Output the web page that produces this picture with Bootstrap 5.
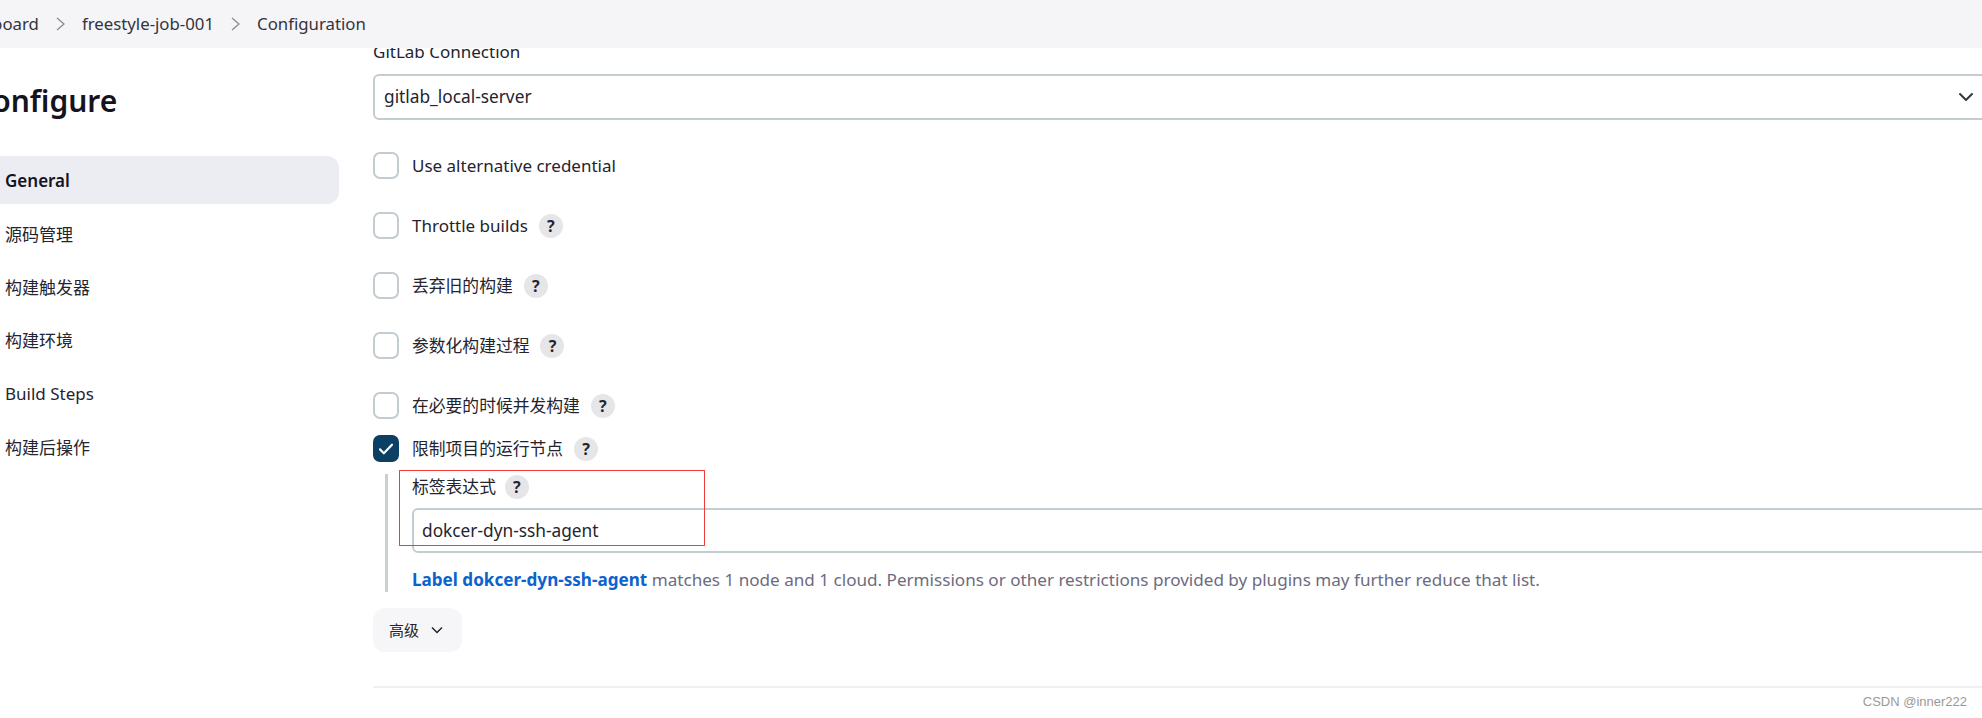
<!DOCTYPE html>
<html lang="zh">
<head>
    <meta charset="UTF-8">
    <title>freestyle-job-001 Config</title>
    <link href="https://cdn.jsdelivr.net/npm/bootstrap@5.3.0/dist/css/bootstrap.min.css" rel="stylesheet">
    <style>
        html, body { height: 718px; overflow: hidden; }
        body {
            font-family: "Noto Sans", "Noto Sans CJK SC", sans-serif;
            font-size: 17px;
            color: #24242f;
            background: #fff;
        }
        .top-crumbs {
            position: relative;
            z-index: 2;
            height: 48px;
            background: #f5f5f7;
        }
        .top-crumbs ol { margin-left: -48px; font-size: 16.8px; gap: 17px; color: #33333f; }
        .top-crumbs svg { display: block; }
        .page-body { margin-right: -20px; }
        .side-col { width: 359px; margin-left: -20px; flex: none; padding-top: 35px; }
        .side-title { font-size: 30px; line-height: 36px; font-weight: 600; margin: 0 0 37px -7px; color: #14141f; }
        .side-col .nav { gap: 5.3px; }
        .side-col .nav-link {
            height: 48px;
            padding: 2px 0 0 25px;
            display: flex;
            align-items: center;
            border-radius: 12px;
            color: #24242f;
        }
        .side-col .nav-link.active { background: #ecedf3; color: #14141f; font-weight: 600; }
        .main-col { flex: 1; min-width: 0; margin-left: 34px; margin-top: -8px; }
        .field-label { line-height: 24px; margin-bottom: 10px; }
        .job-select, .job-input {
            height: 46px;
            border: 2px solid #c3ccd1;
            border-radius: 6px;
            font-size: 17.3px;
            color: #24242f;
            box-shadow: none;
        }
        .job-select {
            padding: 0 40px 0 9px;
            background-position: right 24px center;
            background-size: 20px 16px;
            margin-bottom: 32px;
        }
        .job-input { padding: 0 8px; height: 45px; }
        .check-row { height: 27px; margin-bottom: 33px; gap: 13px; }
        .check-row.tight { margin-bottom: 12px; }
        .check-row.before-tight { margin-bottom: 16px; }
        .cjk-label { font-size: 16.8px; }
        .check-row .form-check-input {
            width: 26px;
            height: 27px;
            margin: 0;
            flex: none;
            border: 2px solid #c3ccd1;
            border-radius: 7px;
        }
        .check-row .form-check-input:checked {
            background-color: #0b3f63;
            border-color: #0b3f63;
            background-size: 24px;
            background-image: url("data:image/svg+xml,%3csvg xmlns='http://www.w3.org/2000/svg' viewBox='0 0 20 20'%3e%3cpath fill='none' stroke='%23fff' stroke-width='1.8' stroke-linecap='round' stroke-linejoin='round' d='M5 10.5l3.2 3.2 6.8-7'/%3e%3c/svg%3e");
        }
        .help-dot {
            width: 24px;
            height: 24px;
            margin-left: -2px;
            border-radius: 50%;
            background: #e6e6e9;
            font-size: 16px;
            font-weight: 700;
            flex: none;
        }
        .nested-block {
            position: relative;
            margin-left: 12px;
            padding-left: 24px;
            border-left: 3px solid #c8d0d4;
            height: 118px;
            padding-top: 1px;
        }
        .nested-label { height: 24px; margin-bottom: 9px; gap: 9px; }
        .nested-label .help-dot { margin-left: 0; }
        .valid-msg { margin-top: 15px; line-height: 24px; color: #6d6b80; white-space: nowrap; font-size: 17.1px; }
        .valid-msg a { color: #0b63ce; font-weight: 700; text-decoration: none; }
        .red-box {
            position: absolute;
            left: 11px;
            top: -4px;
            width: 306px;
            height: 76px;
            border: 1px solid #f23c3c;
            pointer-events: none;
        }
        .more-btn {
            margin-top: 16px;
            width: 89px;
            height: 44px;
            padding: 0 0 0 16px;
            gap: 12px;
            border: 0;
            border-radius: 12px;
            background: #f6f6f8;
            font-size: 15px;
            color: #24242f;
        }
        .end-line { margin: 34px 0 0; height: 2px; background: #f0f0f4; border: 0; opacity: 1; }
        .csdn-mark {
            position: absolute;
            right: 15px;
            bottom: 7px;
            font-family: "Liberation Sans", sans-serif;
            font-size: 13px;
            color: #9a9a9a;
        }
    </style>
</head>
<body>
    <nav class="top-crumbs d-flex align-items-center">
        <ol class="list-unstyled d-flex align-items-center mb-0">
            <li>Dashboard</li>
            <li><svg width="9" height="14" viewBox="0 0 9 14" fill="none" stroke="#8a8a94" stroke-width="1.3"><path d="M1 1l7 6-7 6"/></svg></li>
            <li>freestyle-job-001</li>
            <li><svg width="9" height="14" viewBox="0 0 9 14" fill="none" stroke="#8a8a94" stroke-width="1.3"><path d="M1 1l7 6-7 6"/></svg></li>
            <li>Configuration</li>
        </ol>
    </nav>

    <div class="page-body d-flex">
        <aside class="side-col">
            <h1 class="side-title">Configure</h1>
            <div class="nav nav-pills flex-column">
                <a class="nav-link active" href="#">General</a>
                <a class="nav-link" href="#">源码管理</a>
                <a class="nav-link" href="#">构建触发器</a>
                <a class="nav-link" href="#">构建环境</a>
                <a class="nav-link" href="#">Build Steps</a>
                <a class="nav-link" href="#">构建后操作</a>
            </div>
        </aside>

        <main class="main-col">
            <div class="field-label">GitLab Connection</div>
            <select class="form-select job-select">
                <option>gitlab_local-server</option>
            </select>

            <div class="check-row d-flex align-items-center">
                <input class="form-check-input" type="checkbox">
                <span>Use alternative credential</span>
            </div>
            <div class="check-row d-flex align-items-center">
                <input class="form-check-input" type="checkbox">
                <span>Throttle builds</span>
                <span class="help-dot d-flex align-items-center justify-content-center">?</span>
            </div>
            <div class="check-row d-flex align-items-center">
                <input class="form-check-input" type="checkbox">
                <span class="cjk-label">丢弃旧的构建</span>
                <span class="help-dot d-flex align-items-center justify-content-center">?</span>
            </div>
            <div class="check-row d-flex align-items-center">
                <input class="form-check-input" type="checkbox">
                <span class="cjk-label">参数化构建过程</span>
                <span class="help-dot d-flex align-items-center justify-content-center">?</span>
            </div>
            <div class="check-row before-tight d-flex align-items-center">
                <input class="form-check-input" type="checkbox">
                <span class="cjk-label">在必要的时候并发构建</span>
                <span class="help-dot d-flex align-items-center justify-content-center">?</span>
            </div>
            <div class="check-row tight d-flex align-items-center">
                <input class="form-check-input" type="checkbox" checked>
                <span class="cjk-label">限制项目的运行节点</span>
                <span class="help-dot d-flex align-items-center justify-content-center">?</span>
            </div>

            <div class="nested-block">
                <div class="nested-label d-flex align-items-center">
                    <span class="cjk-label">标签表达式</span>
                    <span class="help-dot d-flex align-items-center justify-content-center">?</span>
                </div>
                <input class="form-control job-input" type="text" value="dokcer-dyn-ssh-agent">
                <div class="valid-msg"><a href="#">Label dokcer-dyn-ssh-agent</a> matches 1 node and 1 cloud. Permissions or other restrictions provided by plugins may further reduce that list.</div>
                <div class="red-box"></div>
            </div>

            <button class="btn more-btn d-flex align-items-center" type="button">
                <span>高级</span>
                <svg width="12" height="8" viewBox="0 0 12 8" fill="none" stroke="#24242f" stroke-width="1.5"><path d="M1 1.5l5 5 5-5"/></svg>
            </button>
            <hr class="end-line">
        </main>
    </div>

    <div class="csdn-mark">CSDN @inner222</div>

    <script src="https://cdn.jsdelivr.net/npm/bootstrap@5.3.0/dist/js/bootstrap.bundle.min.js"></script>
</body>
</html>
